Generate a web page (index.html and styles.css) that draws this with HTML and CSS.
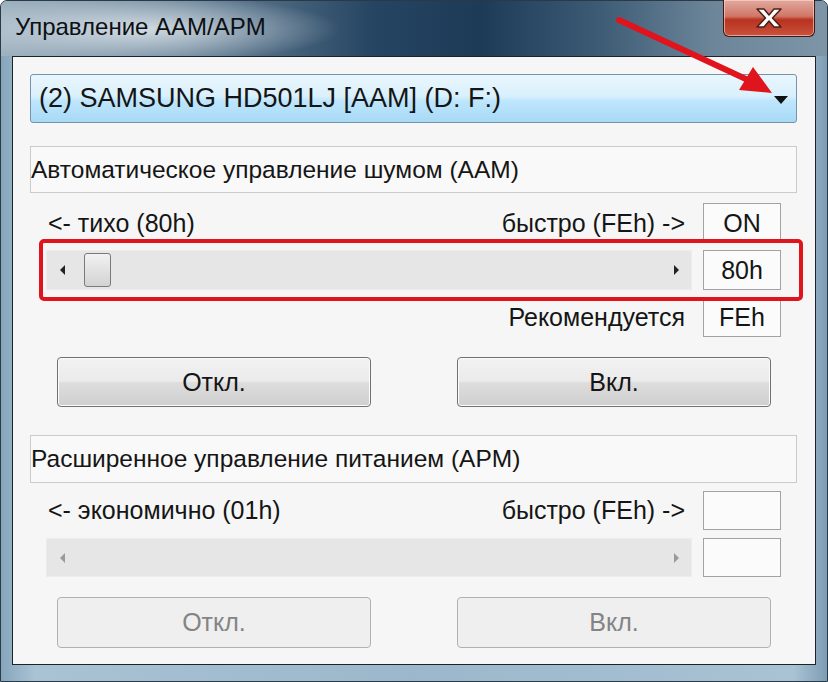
FILE: index.html
```html
<!DOCTYPE html>
<html lang="ru">
<head>
  <meta charset="UTF-8" />
  <title>Управление AAM/APM</title>
  <link rel="stylesheet" href="styles.css">
</head>
<body>
  <div class="window">
    <div class="titlebar">
      <span class="title">Управление AAM/APM</span>
      <div class="close">
        <svg width="30" height="22" viewBox="0 0 30 22">
          <path d="M3 2h7l5 6 5-6h7l-8.5 9L27 20h-7l-5-6-5 6H3l8.5-9z" fill="#fff" stroke="#4a2018" stroke-width="1.5" stroke-linejoin="round"/>
        </svg>
      </div>
    </div>

    <div class="client">
      <div class="combo">
        <span>(2) SAMSUNG HD501LJ [AAM] (D: F:)</span>
        <span class="caret"></span>
      </div>

      <div class="group-title">Автоматическое управление шумом (AAM)</div>
      <div class="rows">
        <div class="labels"><span>&lt;- тихо (80h)</span><span>быстро (FEh) -&gt;</span></div>
        <div class="value">ON</div>
        <div class="slider">
          <i class="arrow left"></i>
          <i class="thumb"></i>
          <i class="arrow right"></i>
        </div>
        <div class="value">80h</div>
        <div class="hint">Рекомендуется</div>
        <div class="value">FEh</div>
      </div>
      <div class="buttons">
        <button class="btn">Откл.</button>
        <button class="btn">Вкл.</button>
      </div>

      <div class="group-title second">Расширенное управление питанием (APM)</div>
      <div class="rows apm">
        <div class="labels"><span>&lt;- экономично (01h)</span><span>быстро (FEh) -&gt;</span></div>
        <div class="value"></div>
        <div class="slider off">
          <i class="arrow left"></i>
          <i class="arrow right"></i>
        </div>
        <div class="value"></div>
      </div>
      <div class="buttons last">
        <button class="btn" disabled>Откл.</button>
        <button class="btn" disabled>Вкл.</button>
      </div>
    </div>

    <!-- пометки поверх скриншота -->
    <div class="mark"></div>
    <svg class="pointer" width="828" height="682" viewBox="0 0 828 682">
      <line x1="619" y1="20" x2="748" y2="80" stroke="#e0141c" stroke-width="6" stroke-linecap="round"/>
      <polygon points="772,93 739,90 753,67" fill="#e0141c"/>
    </svg>
  </div>
</body>
</html>
```

FILE: styles.css
```css
* {
  box-sizing: border-box;
}

body {
  margin: 0;
  font-family: "Liberation Sans", Arial, sans-serif;
  color: #151515;
}

.window {
  position: relative;
  width: 828px;
  height: 682px;
  display: flex;
  flex-direction: column;
  border-radius: 7px 7px 0 0;
  background: linear-gradient(to right, #86a5bb, #a9c2d4 4%, #9cb7cb 50%, #a9c2d4 96%, #7e9db4);
  border: 1px solid #2b3a46;
}

.titlebar {
  height: 55px;
  display: flex;
  justify-content: space-between;
  align-items: flex-start;
  background:
    radial-gradient(ellipse 200px 34px at 140px 28px, rgba(225, 232, 238, 0.85), rgba(225, 232, 238, 0) 100%),
    linear-gradient(to right, #9fb2c0 0%, #6d879b 22%, #264562 45%, #1d3b57 58%, #3c5a74 72%, #6c8599 86%, #7d95a7 100%);
  border-radius: 6px 6px 0 0;
}

.title {
  margin: 12px 0 0 14px;
  font-size: 24px;
  color: #0c1014;
}

.close {
  width: 92px;
  height: 37px;
  margin: -1px 12px 0 0;
  display: flex;
  align-items: center;
  justify-content: center;
  border: 1px solid #3b1a16;
  border-top: none;
  border-radius: 0 0 6px 6px;
  background: linear-gradient(#e2a99f, #d07767 45%, #b8321f 55%, #c9533d);
  box-shadow: inset 0 0 0 1px rgba(255, 220, 210, 0.6);
}

.client {
  flex: 1;
  margin: 0 11px 16px 11px;
  padding: 17px 18px 0 17px;
  background: #f6f6f6;
  border: 1px solid #1b232b;
}

.combo {
  height: 49px;
  display: flex;
  align-items: center;
  justify-content: space-between;
  padding: 0 8px 0 8px;
  font-size: 27px;
  border: 1px solid #7594ab;
  border-radius: 3px;
  background: linear-gradient(#eaf6fd, #d9f0fc 45%, #bee6fd 55%, #a7d9f5);
}

.caret {
  width: 0;
  height: 0;
  margin-top: 2px;
  border-left: 7px solid transparent;
  border-right: 7px solid transparent;
  border-top: 8px solid #111;
}

.group-title {
  height: 47px;
  margin-top: 23px;
  display: flex;
  align-items: center;
  padding-left: 0;
  font-size: 24.5px;
  background: #f9f9f9;
  border: 1px solid #cbcbcb;
}

.group-title.second {
  height: 48px;
  margin-top: 28px;
}

.rows {
  display: grid;
  grid-template-columns: 1fr 78px;
  grid-auto-rows: 40px;
  column-gap: 11px;
  row-gap: 7px;
  margin: 10px 16px 0 16px;
  font-size: 25px;
}

.rows.apm {
  grid-auto-rows: 39px;
  row-gap: 8px;
  margin-top: 8px;
}

.labels {
  display: flex;
  justify-content: space-between;
  align-items: center;
  padding: 0 7px 0 2px;
}

.hint {
  display: flex;
  justify-content: flex-end;
  align-items: center;
  padding-right: 7px;
}

.value {
  display: flex;
  align-items: center;
  justify-content: center;
  background: #fbfbfb;
  border: 1px solid #a2a2a2;
}

.slider {
  display: flex;
  align-items: center;
  padding: 0 12px 0 13px;
  background: #e6e6e6;
  border: 1px solid #ececec;
}

.arrow {
  width: 0;
  height: 0;
  border-top: 5px solid transparent;
  border-bottom: 5px solid transparent;
}

.arrow.left {
  border-right: 5px solid #222;
}

.arrow.right {
  margin-left: auto;
  border-left: 5px solid #222;
}

.slider.off .arrow.left {
  border-right-color: #9a9a9a;
}

.slider.off .arrow.right {
  border-left-color: #9a9a9a;
}

.thumb {
  width: 27px;
  height: 34px;
  margin-left: 19px;
  border: 1px solid #7a7a7a;
  border-radius: 3px;
  background: linear-gradient(#f2f2f2, #e2e2e2 50%, #d3d3d3);
}

.buttons {
  display: flex;
  justify-content: space-between;
  margin: 20px 26px 0 27px;
}

.buttons.last {
  margin-top: 20px;
}

.btn {
  width: 314px;
  height: 50px;
  font-family: inherit;
  font-size: 25px;
  color: #151515;
  border: 1px solid #707070;
  border-radius: 4px;
  background: linear-gradient(#f2f2f2, #ebebeb 48%, #dddddd 52%, #cfcfcf);
  box-shadow: inset 0 0 0 1px #fcfcfc;
}

.btn:disabled {
  height: 51px;
  color: #848484;
  border-color: #adb2b5;
  background: #efefef;
  box-shadow: none;
}

.mark {
  position: absolute;
  left: 38px;
  top: 238px;
  width: 764px;
  height: 62px;
  border: 4px solid #e0141c;
  border-radius: 5px;
}

.pointer {
  position: absolute;
  left: -1px;
  top: -1px;
}
```
